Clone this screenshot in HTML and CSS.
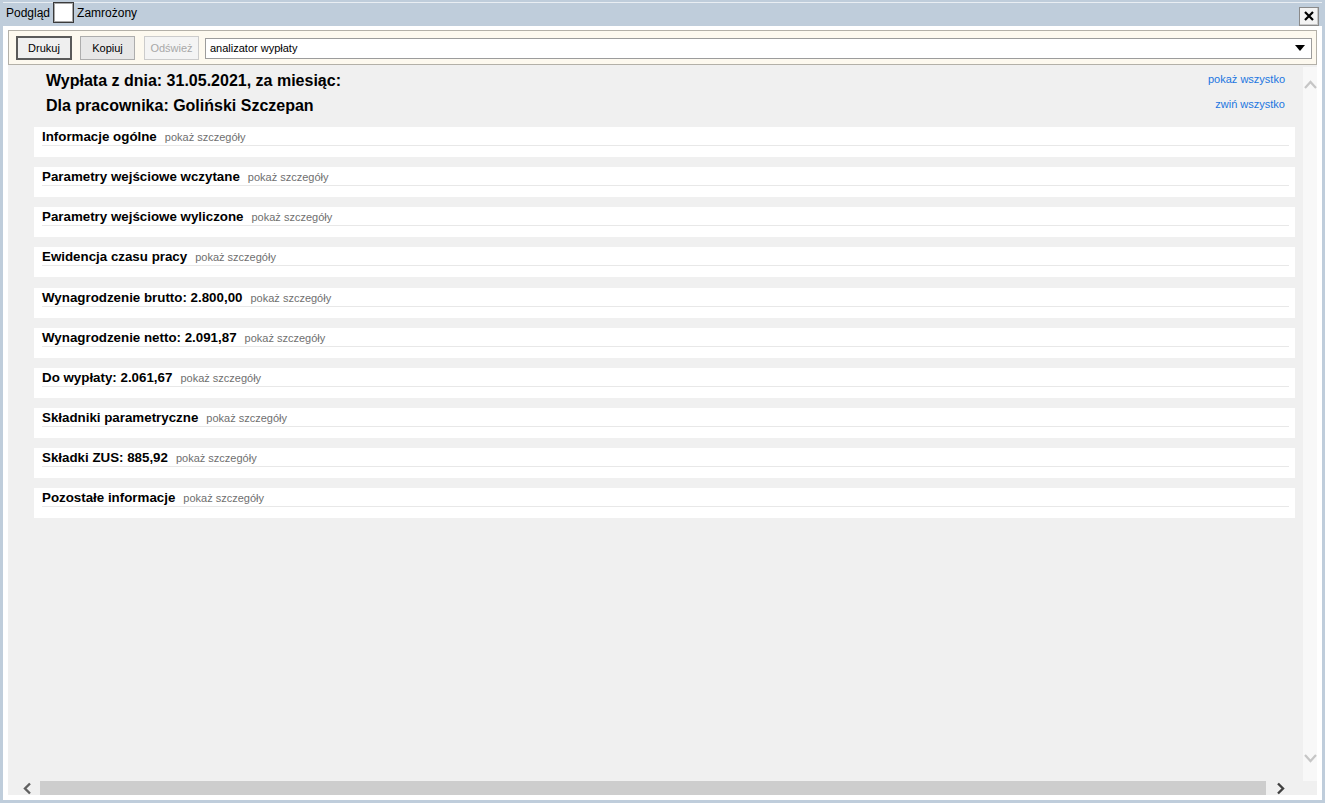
FILE: index.html
```html
<!DOCTYPE html>
<html lang="pl">
<head>
<meta charset="utf-8">
<title>Podgląd</title>
<link rel="stylesheet" href="styles.css">
</head>
<body>
<div class="window">
  <div class="titlebar">
    <span class="tlabel">Podgląd</span>
    <span class="checkbox"></span>
    <span class="tlabel">Zamrożony</span>
    <span class="spacer"></span>
    <button class="close" type="button">
      <svg width="12" height="12" viewBox="0 0 12 12"><path d="M2 2 L10 10 M10 2 L2 10" stroke="#000" stroke-width="2.2" fill="none"/></svg>
    </button>
  </div>
  <div class="panel">
    <div class="toolbar">
      <button class="btn btn-default" type="button">Drukuj</button>
      <button class="btn btn-plain" type="button">Kopiuj</button>
      <button class="btn btn-disabled" type="button">Odśwież</button>
      <div class="select">
        <span>analizator wypłaty</span>
        <svg width="10" height="6" viewBox="0 0 10 6"><path d="M0 0 H10 L5 6 Z" fill="#000"/></svg>
      </div>
    </div>
    <div class="viewport">
      <div class="mainrow">
        <div class="content">
          <div class="header">
            <div class="htitles">
              <div class="htitle">Wypłata z dnia: 31.05.2021, za miesiąc:</div>
              <div class="htitle">Dla pracownika: Goliński Szczepan</div>
            </div>
            <div class="hlinks">
              <a class="link">pokaż wszystko</a>
              <a class="link">zwiń wszystko</a>
            </div>
          </div>
          <div class="sections">
            <div class="section"><div class="shead"><b>Informacje ogólne</b><span class="more">pokaż szczegóły</span></div></div>
            <div class="section"><div class="shead"><b>Parametry wejściowe wczytane</b><span class="more">pokaż szczegóły</span></div></div>
            <div class="section"><div class="shead"><b>Parametry wejściowe wyliczone</b><span class="more">pokaż szczegóły</span></div></div>
            <div class="section"><div class="shead"><b>Ewidencja czasu pracy</b><span class="more">pokaż szczegóły</span></div></div>
            <div class="section"><div class="shead"><b>Wynagrodzenie brutto: 2.800,00</b><span class="more">pokaż szczegóły</span></div></div>
            <div class="section"><div class="shead"><b>Wynagrodzenie netto: 2.091,87</b><span class="more">pokaż szczegóły</span></div></div>
            <div class="section"><div class="shead"><b>Do wypłaty: 2.061,67</b><span class="more">pokaż szczegóły</span></div></div>
            <div class="section"><div class="shead"><b>Składniki parametryczne</b><span class="more">pokaż szczegóły</span></div></div>
            <div class="section"><div class="shead"><b>Składki ZUS: 885,92</b><span class="more">pokaż szczegóły</span></div></div>
            <div class="section"><div class="shead"><b>Pozostałe informacje</b><span class="more">pokaż szczegóły</span></div></div>
          </div>
        </div>
        <div class="vscroll">
          <svg width="13" height="9" viewBox="0 0 13 9"><path d="M1 8 L6.5 2 L12 8" stroke="#c6c6c6" stroke-width="2.2" fill="none"/></svg>
          <svg width="13" height="9" viewBox="0 0 13 9"><path d="M1 1 L6.5 7 L12 1" stroke="#c6c6c6" stroke-width="2.2" fill="none"/></svg>
        </div>
      </div>
      <div class="hscroll">
        <svg class="harrow" width="9" height="13" viewBox="0 0 9 13"><path d="M7 1.5 L2 6.5 L7 11.5" stroke="#606060" stroke-width="2.4" fill="none"/></svg>
        <div class="hthumb"></div>
        <svg class="harrow" width="9" height="13" viewBox="0 0 9 13"><path d="M2 1.5 L7 6.5 L2 11.5" stroke="#404040" stroke-width="2.4" fill="none"/></svg>
        <div class="corner"></div>
      </div>
    </div>
  </div>
</div>
</body>
</html>
```

FILE: styles.css
```css
html, body {
  margin: 0;
  padding: 0;
  width: 1325px;
  height: 803px;
  overflow: hidden;
  background: #bfcddb;
  font-family: "Liberation Sans", Arial, sans-serif;
}
.window {
  box-sizing: border-box;
  width: 1325px;
  height: 803px;
  padding: 0 3px 3px 3px;
  display: flex;
  flex-direction: column;
}
.titlebar {
  height: 23px;
  margin-top: 2px;
  border-top: 1px solid #e9eef3;
  display: flex;
  align-items: center;
  padding: 0 0 0 3px;
  font-size: 12px;
  color: #000;
}
.tlabel { line-height: 14px; margin-top: -4px; }
.checkbox {
  box-sizing: border-box;
  width: 21px;
  height: 21px;
  margin: -1px 3px 0 3px;
  background: #fff;
  border: 1px solid #3a3a3a;
  box-shadow: inset 0 0 0 1px #a8a8a8;
  align-self: flex-start;
}
.spacer { flex: 1; }
.close {
  box-sizing: border-box;
  width: 20px;
  height: 19px;
  margin: 3px 3px 0 0;
  padding: 0;
  display: flex;
  align-items: center;
  justify-content: center;
  background: #f3f3f3;
  border: 1px solid #8a8a8a;
  box-shadow: inset -1px -1px 0 #c8c8c8;
}
.panel {
  flex: 1;
  background: #fff;
  padding: 4px 5px 5px 5px;
  display: flex;
  flex-direction: column;
  min-height: 0;
}
.toolbar {
  box-sizing: border-box;
  height: 35px;
  background: #fdf9ef;
  border: 1px solid #b3b0a8;
  display: flex;
  align-items: center;
  padding: 0 4px 0 7px;
}
.btn {
  box-sizing: border-box;
  width: 55px;
  height: 24px;
  padding: 0;
  font-family: "Liberation Sans", Arial, sans-serif;
  font-size: 11px;
  color: #000;
  background: #e6e6e6;
  border: 1px solid #adadad;
}
.btn-default {
  width: 56px;
  margin-right: 8px;
  background: #efefef;
  border: 2px solid #5a5a5a;
}
.btn-plain {
  margin-right: 9px;
  background: #e7e7e7;
}
.btn-disabled {
  margin-right: 6px;
  color: #a8a8a8;
  background: #f4f4f4;
  border-color: #cccccc;
}
.select {
  box-sizing: border-box;
  flex: 1;
  height: 21px;
  margin-top: 1px;
  background: #fff;
  border: 1px solid #9c9c9c;
  display: flex;
  align-items: center;
  justify-content: space-between;
  padding: 0 6px 0 4px;
  font-size: 11px;
  color: #000;
}
.viewport {
  flex: 1;
  background: #f0f0f0;
  display: flex;
  flex-direction: column;
  min-height: 0;
}
.mainrow {
  flex: 1;
  display: flex;
  min-height: 0;
}
.content {
  flex: 1;
  padding: 0 8px 0 26px;
}
.header {
  display: flex;
  justify-content: space-between;
  padding: 3px 10px 0 12px;
  height: 62px;
  box-sizing: border-box;
}
.htitle {
  font-size: 16px;
  font-weight: bold;
  color: #000;
  line-height: 25px;
  height: 25px;
}
.hlinks {
  display: flex;
  flex-direction: column;
  align-items: flex-end;
  margin-top: -1px;
}
.link {
  font-size: 11px;
  color: #2176e0;
  line-height: 25px;
}
.sections {
  display: flex;
  flex-direction: column;
  gap: 10px;
}
.section {
  background: #fff;
  height: 30px;
  box-sizing: border-box;
  padding: 0 6px 0 8px;
}
.section:nth-child(5) { margin-top: 1px; }
.shead {
  height: 18px;
  border-bottom: 1px solid #e8e8e8;
  display: flex;
  align-items: flex-end;
  white-space: nowrap;
}
.shead b {
  font-size: 13.33px;
  color: #000;
  line-height: 16px;
}
.more {
  font-size: 11px;
  color: #6f6f6f;
  margin-left: 8px;
  line-height: 15px;
}
.vscroll {
  width: 14px;
  background: #f8f8f8;
  display: flex;
  flex-direction: column;
  justify-content: space-between;
  align-items: center;
  padding: 13px 0 18px 0;
  margin-top: 2px;
}
.vscroll svg { margin-left: 1px; }
.hscroll {
  height: 14px;
  display: flex;
  align-items: center;
  padding-left: 15px;
}
.harrow { flex: none; }
.hthumb {
  width: 1226px;
  height: 14px;
  margin: 0 10px 0 8px;
  background: #cdcdcd;
}
.corner { flex: 1; }
```
